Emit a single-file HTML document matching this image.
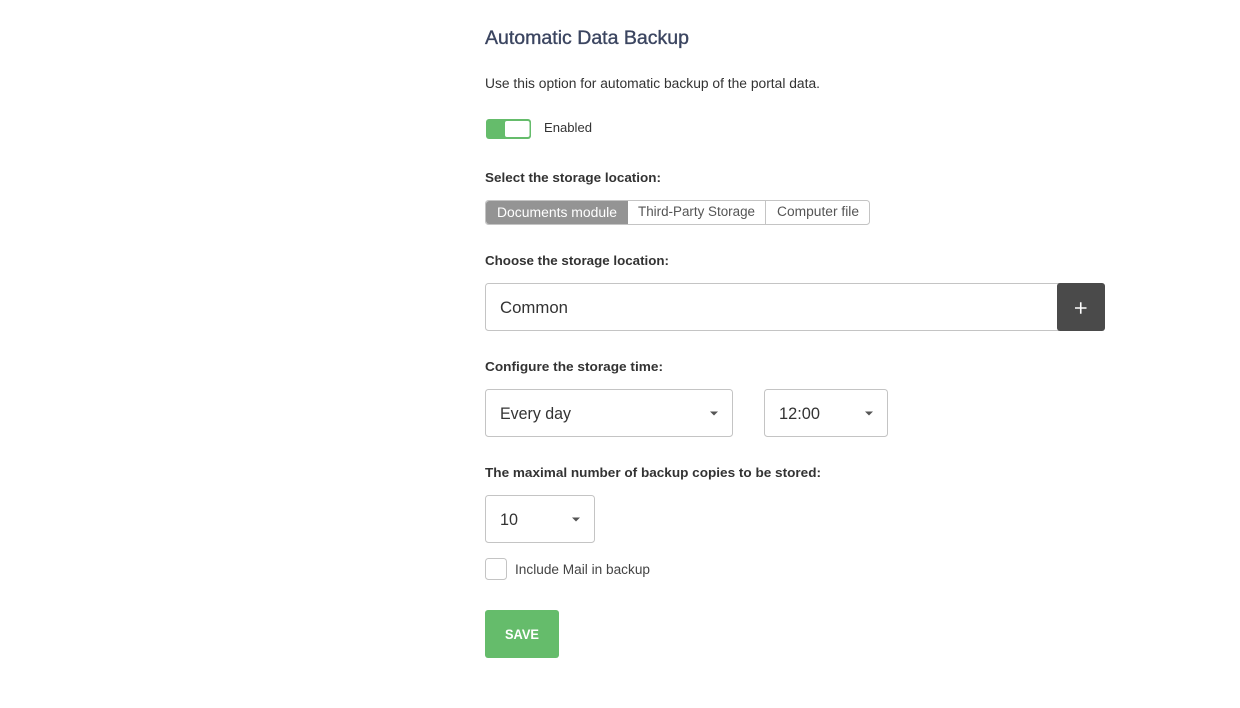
<!DOCTYPE html>
<html lang="en"><head><meta charset="utf-8"><title>Automatic Data Backup</title>
<style>
html,body{margin:0;padding:0;background:#fff;width:1240px;height:708px;overflow:hidden}
svg{display:block}
text{font-family:"Liberation Sans",sans-serif;font-size:13px;fill:#333;}
.b{font-weight:700;fill:#333}
.v{font-size:17px;fill:#333}
</style></head><body>
<svg width="1240" height="708" viewBox="0 0 1240 708" xmlns="http://www.w3.org/2000/svg">
<rect width="1240" height="708" fill="#fff"/>
<text x="485" y="44" textLength="204" lengthAdjust="spacingAndGlyphs" style="font-size:19px;fill:#3b4560;stroke:#3b4560;stroke-width:.35">Automatic Data Backup</text>
<text x="485" y="88" textLength="335" lengthAdjust="spacingAndGlyphs" style="font-size:13.500px">Use this option for automatic backup of the portal data.</text>

<rect x="486" y="119" width="45" height="20" rx="3" fill="#65bc6b"/>
<rect x="505" y="121" width="24.500" height="16" rx="2" fill="#fff"/>
<text x="544" y="132" textLength="48" lengthAdjust="spacingAndGlyphs" style="font-size:12.500px">Enabled</text>

<text class="b" x="485" y="182" textLength="176" lengthAdjust="spacingAndGlyphs">Select the storage location:</text>
<rect x="485.500" y="200.500" width="384" height="24" rx="3" fill="#fff" stroke="#c4c4c4"/>
<path d="M489 201H628V224H489a3 3 0 0 1-3-3V204a3 3 0 0 1 3-3z" fill="#949494"/>
<rect x="765" y="201" width="1" height="23" fill="#c4c4c4"/>
<text x="497" y="217" textLength="120" lengthAdjust="spacingAndGlyphs" style="fill:#fff;font-size:13.500px">Documents module</text>
<text x="638" y="216" textLength="117" lengthAdjust="spacingAndGlyphs" style="fill:#555;font-size:13.500px">Third-Party Storage</text>
<text x="777" y="216" textLength="82" lengthAdjust="spacingAndGlyphs" style="fill:#555;font-size:13.500px">Computer file</text>

<text class="b" x="485" y="265" textLength="184" lengthAdjust="spacingAndGlyphs">Choose the storage location:</text>
<rect x="485.500" y="283.500" width="580" height="47" rx="3" fill="#fff" stroke="#c4c4c4"/>
<text class="v" x="500" y="313" textLength="68" lengthAdjust="spacingAndGlyphs">Common</text>
<rect x="1057" y="283" width="48" height="48" rx="3" fill="#4a4a4a"/>
<path d="M1075 308H1086.500M1080.750 302.250V313.750" stroke="#fff" stroke-width="1.600" fill="none"/>

<text class="b" x="485" y="371" textLength="178" lengthAdjust="spacingAndGlyphs">Configure the storage time:</text>
<rect x="485.500" y="389.500" width="247" height="47" rx="3" fill="#fff" stroke="#c4c4c4"/>
<text class="v" x="500" y="419" textLength="71" lengthAdjust="spacingAndGlyphs">Every day</text>
<path d="M710 411.500H718L714 415.500z" fill="#555"/>
<rect x="764.500" y="389.500" width="123" height="47" rx="3" fill="#fff" stroke="#c4c4c4"/>
<text class="v" x="779" y="419" textLength="41" lengthAdjust="spacingAndGlyphs">12:00</text>
<path d="M865 411.500H873L869 415.500z" fill="#555"/>

<text class="b" x="485" y="477" textLength="336" lengthAdjust="spacingAndGlyphs">The maximal number of backup copies to be stored:</text>
<rect x="485.500" y="495.500" width="109" height="47" rx="3" fill="#fff" stroke="#c4c4c4"/>
<text class="v" x="500" y="525" textLength="18" lengthAdjust="spacingAndGlyphs">10</text>
<path d="M572 517.500H580L576 521.500z" fill="#555"/>

<rect x="485.500" y="558.500" width="21" height="21" rx="3" fill="#fff" stroke="#c4c4c4"/>
<text x="515" y="574" textLength="135" lengthAdjust="spacingAndGlyphs" style="fill:#444;font-size:13.500px">Include Mail in backup</text>

<rect x="485" y="610" width="74" height="48" rx="3" fill="#65bc6b"/>
<text x="505" y="639" textLength="34" lengthAdjust="spacingAndGlyphs" style="font-weight:700;font-size:14px;fill:#fff">SAVE</text>
</svg>
</body></html>
